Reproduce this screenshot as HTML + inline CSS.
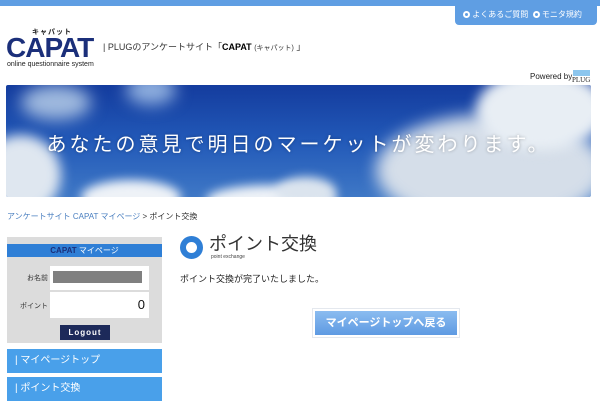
<!DOCTYPE html>
<html><head><meta charset="utf-8"><style>
*{margin:0;padding:0;box-sizing:border-box}
body{width:600px;height:404px;overflow:hidden;background:#fff;font-family:"Liberation Sans","Noto Sans CJK JP",sans-serif;position:relative;color:#333}
.a{position:absolute}
.r{display:inline-block;width:7px;height:7px;border:2px solid #fff;border-radius:50%;vertical-align:-1px}
</style></head><body>
<div class="a" style="left:0;top:0;width:600px;height:6px;background:#5f9ee3"></div>
<div class="a" style="left:455px;top:4px;width:142px;height:21px;background:#5f9ee3;border-radius:0 0 4px 4px;color:#fff;font-size:8px;line-height:21px;padding-left:8px;white-space:nowrap">
<span class="r"></span> よくあるご質問&nbsp;&nbsp;<span class="r"></span> モニタ規約</div>
<div class="a" style="left:32px;top:27px;font-size:7px;color:#222;letter-spacing:1px;font-weight:bold">キャパット</div>
<div class="a" style="left:6px;top:34px;font-size:28px;font-weight:bold;color:#1b2f7a;letter-spacing:-1px;line-height:28px">CAPAT</div>
<div class="a" style="left:7px;top:61px;font-size:7px;color:#222">online questionnaire system</div>
<div class="a" style="left:103px;top:40px;font-size:9px;color:#333;white-space:nowrap">| PLUGのアンケートサイト「<b style="color:#000">CAPAT</b> <span style="font-size:7px">(キャパット)</span> 」</div>
<div class="a" style="left:530px;top:72px;font-size:8px;color:#222">Powered by</div>
<div class="a" style="left:573px;top:70px;width:17px;height:6px;background:#8cc6ee"></div>
<div class="a" style="left:572px;top:76px;font-size:7px;color:#222;font-family:'Liberation Serif',serif">PLUG</div>
<div class="a" style="left:6px;top:85px;width:585px;height:112px;overflow:hidden;border-radius:2px;background:linear-gradient(180deg,#143c9e 0%,#2259b8 50%,#3f78c6 100%)">
<div class="a" style="left:-25px;top:50px;width:80px;height:80px;border-radius:50%;background:#dfe7f0;filter:blur(6px)"></div>
<div class="a" style="left:15px;top:0px;width:70px;height:35px;border-radius:50%;background:#9fb9de;filter:blur(8px)"></div>
<div class="a" style="left:120px;top:-10px;width:50px;height:30px;border-radius:50%;background:#8eaede;filter:blur(8px)"></div>
<div class="a" style="left:75px;top:95px;width:100px;height:35px;border-radius:50%;background:#eef2f7;filter:blur(5px)"></div>
<div class="a" style="left:200px;top:100px;width:130px;height:30px;border-radius:50%;background:#eef2f7;filter:blur(5px)"></div>
<div class="a" style="left:270px;top:92px;width:60px;height:30px;border-radius:50%;background:#dbe4ee;filter:blur(5px)"></div>
<div class="a" style="left:370px;top:30px;width:230px;height:110px;border-radius:50%;background:#d5dee9;filter:blur(8px)"></div>
<div class="a" style="left:470px;top:-15px;width:130px;height:80px;border-radius:50%;background:#e8eef4;filter:blur(6px)"></div>
<div class="a" style="left:0;top:43px;width:585px;text-align:center;color:#fff;font-size:20px;letter-spacing:3px;text-shadow:0 0 3px rgba(0,0,0,.3)">あなたの意見で明日のマーケットが変わります。</div>
</div>
<div class="a" style="left:7px;top:211px;font-size:8px;color:#4a7fc0;white-space:nowrap">アンケートサイト CAPAT マイページ <span style="color:#333">&gt; ポイント交換</span></div>
<div class="a" style="left:7px;top:237px;width:155px;height:106px;background:#dcdcdc"></div>
<div class="a" style="left:7px;top:244px;width:155px;height:13px;background:#2f7fd6;color:#fff;font-size:8px;line-height:13px;text-align:center"><b style="color:#1b2f7a">CAPAT</b> マイページ</div>
<div class="a" style="left:50px;top:266px;width:99px;height:24px;background:#fff"></div>
<div class="a" style="left:53px;top:271px;width:89px;height:12px;background:#808080"></div>
<div class="a" style="left:27px;top:273px;font-size:7px;color:#333">お名前</div>
<div class="a" style="left:50px;top:292px;width:99px;height:26px;background:#fff;text-align:right;padding-right:4px;font-size:13px;line-height:26px;color:#111">0</div>
<div class="a" style="left:20px;top:301px;font-size:7px;color:#333">ポイント</div>
<div class="a" style="left:60px;top:325px;width:50px;height:15px;background:#1d2a5a;color:#fff;font-size:8px;font-weight:bold;text-align:center;line-height:15px;letter-spacing:1px">Logout</div>
<div class="a" style="left:7px;top:349px;width:155px;height:24px;background:#49a0ea;color:#fff;font-size:10px;line-height:24px;padding-left:8px">| マイページトップ</div>
<div class="a" style="left:7px;top:377px;width:155px;height:24px;background:#49a0ea;color:#fff;font-size:10px;line-height:24px;padding-left:8px">| ポイント交換</div>
<div class="a" style="left:180px;top:236px;width:23px;height:23px;border-radius:50%;border:6px solid #2f7fd6"></div>
<div class="a" style="left:209px;top:234px;font-size:18px;color:#333;line-height:20px">ポイント交換</div>
<div class="a" style="left:211px;top:254px;font-size:5px;color:#444">point exchange</div>
<div class="a" style="left:180px;top:272px;font-size:9px;color:#222">ポイント交換が完了いたしました。</div>
<div class="a" style="left:312px;top:308px;width:148px;height:30px;border:1px solid #e4e8ee;padding:2px"><div style="width:100%;height:100%;background:linear-gradient(180deg,#8bbcf0,#5e9ae2);color:#fff;font-size:11px;font-weight:bold;text-align:center;line-height:24px">マイページトップへ戻る</div></div>
</body></html>
